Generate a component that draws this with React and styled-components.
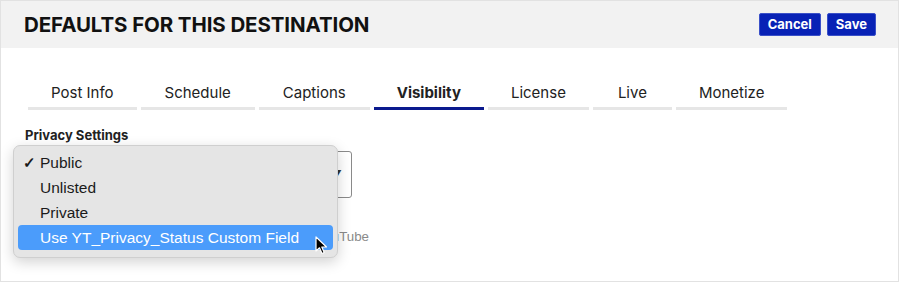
import React from "react";
import styled, { createGlobalStyle } from "styled-components";

const Global = createGlobalStyle`
  html, body { margin: 0; padding: 0; background: #fff; }
  * { box-sizing: border-box; }
`;

const Frame = styled.div`
  position: relative;
  width: 899px;
  height: 282px;
  border: 1px solid #e2e2e2;
  background: #fff;
  font-family: Inter, "Liberation Sans", sans-serif;
  overflow: hidden;
`;

const Header = styled.header`
  height: 47px;
  background: #f2f2f2;
  display: flex;
  align-items: center;
  justify-content: space-between;
  padding: 0 22px 0 23px;
`;

const Title = styled.h1`
  margin: 0;
  font-size: 20.5px;
  font-weight: 700;
  color: #111;
  letter-spacing: -0.1px;
`;

const Actions = styled.div`
  display: flex;
  gap: 6px;
  margin-top: -1px;
`;

const Button = styled.button`
  height: 23px;
  padding: 0 ${(p) => p.$pad}px;
  background: #0822b6;
  color: #fff;
  border: 1px solid #3a50c8;
  border-radius: 2px;
  font-family: Inter, "Liberation Sans", sans-serif;
  font-weight: 700;
  font-size: 13px;
  line-height: 1;
`;

const Body = styled.div`
  padding: 32px 24px 0 24px;
`;

const Tabs = styled.div`
  display: flex;
  gap: 4px;
  margin-left: 3px;
`;

const Tab = styled.div`
  padding: 3px ${(p) => p.$pad}px 5px;
  border-bottom: 3px solid ${(p) => (p.$active ? "#0b1a8e" : "#e6e6e6")};
  font-size: 15px;
  font-weight: ${(p) => (p.$active ? 700 : 400)};
  color: #222;
  text-align: center;
`;

const Label = styled.div`
  margin-top: 17px;
  font-size: 13px;
  font-weight: 700;
  color: #222;
`;

const SelectBox = styled.div`
  margin-top: 8px;
  width: 327px;
  height: 47px;
  border: 1px solid #8a8a8a;
  border-radius: 3px;
  display: flex;
  align-items: center;
  justify-content: flex-end;
  padding-right: 9px;
  color: #333;
  font-size: 12px;
`;

const Help = styled.div`
  margin-top: 31px;
  font-size: 13.3px;
  color: #8a8a8a;
  white-space: nowrap;
  font-family: "Liberation Sans", sans-serif;
`;

const Menu = styled.div`
  position: absolute;
  left: 12px;
  top: 144px;
  width: 325px;
  height: 113px;
  background: #e5e5e5;
  border: 1px solid #cfcfcf;
  border-radius: 7px;
  box-shadow: 0 4px 14px rgba(0, 0, 0, 0.18);
  padding: 4px 4px;
  font-family: "Liberation Sans", Arial, sans-serif;
  font-size: 15.5px;
`;

const Item = styled.div`
  position: relative;
  height: 25px;
  display: flex;
  align-items: center;
  padding-left: 22px;
  border-radius: 4px;
  color: ${(p) => (p.$hl ? "#fff" : "#1a1a1a")};
  background: ${(p) => (p.$hl ? "#4b9cfb" : "transparent")};
`;

const Check = styled.span`
  position: absolute;
  left: 5px;
  font-size: 15px;
  font-weight: 700;
`;

const Cursor = styled.svg`
  position: absolute;
  left: 314px;
  top: 235px;
`;

export default function App() {
  return (
    <>
      <Global />
      <Frame>
        <Header>
          <Title>DEFAULTS FOR THIS DESTINATION</Title>
          <Actions>
            <Button $pad={8}>Cancel</Button>
            <Button $pad={8}>Save</Button>
          </Actions>
        </Header>
        <Body>
          <Tabs>
            <Tab $pad={23}>Post Info</Tab>
            <Tab $pad={24}>Schedule</Tab>
            <Tab $pad={24}>Captions</Tab>
            <Tab $pad={23} $active>Visibility</Tab>
            <Tab $pad={23}>License</Tab>
            <Tab $pad={25}>Live</Tab>
            <Tab $pad={23}>Monetize</Tab>
          </Tabs>
          <Label>Privacy Settings</Label>
          <SelectBox>▼</SelectBox>
          <Help>Sets the privacy status of the videos published to YouTube</Help>
        </Body>
        <Menu>
          <Item><Check>✓</Check>Public</Item>
          <Item>Unlisted</Item>
          <Item>Private</Item>
          <Item $hl>Use YT_Privacy_Status Custom Field</Item>
        </Menu>
        <Cursor width="14" height="20" viewBox="0 0 14 20">
          <path d="M1 1 L1 15 L4.5 11.8 L7 17.5 L9.2 16.5 L6.8 11 L11.5 11 Z" fill="#000" stroke="#fff" strokeWidth="1.2" strokeLinejoin="round" />
        </Cursor>
      </Frame>
    </>
  );
}
